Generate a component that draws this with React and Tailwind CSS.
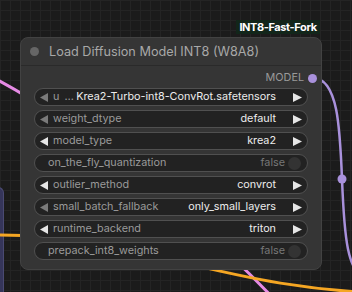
import React from "react";

const rows = [
  { type: "combo", label: "u", value: "Krea2-Turbo-int8-ConvRot.safetensors", leftOn: false, ellipsis: true },
  { type: "combo", label: "weight_dtype", value: "default", leftOn: false },
  { type: "combo", label: "model_type", value: "krea2", leftOn: true },
  { type: "toggle", label: "on_the_fly_quantization", value: "false" },
  { type: "combo", label: "outlier_method", value: "convrot", leftOn: true },
  { type: "combo", label: "small_batch_fallback", value: "only_small_layers", leftOn: false },
  { type: "combo", label: "runtime_backend", value: "triton", leftOn: true },
  { type: "toggle", label: "prepack_int8_weights", value: "false" },
];

function LeftArrow({ on }) {
  return (
    <svg width="8" height="9" viewBox="0 0 8 9" className="shrink-0">
      <polygon points="8,0 8,9 0,4.5" fill={on ? "#e6e6e6" : "#7a7a7a"} />
    </svg>
  );
}

function RightArrow() {
  return (
    <svg width="9" height="9" viewBox="0 0 9 9" className="shrink-0">
      <polygon points="0,0 0,9 9,4.5" fill="#e6e6e6" />
    </svg>
  );
}

function Row({ r }) {
  if (r.type === "toggle") {
    return (
      <div className="flex h-[18px] items-center rounded-full border border-[#505050] bg-[#222222] pl-[13px] pr-[6px]">
        <span className="flex-1 whitespace-nowrap text-[#9a9a9a]">{r.label}</span>
        <span className="text-[#777777]">{r.value}</span>
        <span className="ml-[3px] h-[13px] w-[13px] rounded-full bg-[#333333]" />
      </div>
    );
  }
  return (
    <div className="flex h-[18px] items-center rounded-full border border-[#505050] bg-[#222222] pl-[5px] pr-[5px]">
      <LeftArrow on={r.leftOn} />
      <span className="ml-[5px] whitespace-nowrap text-[#9a9a9a]">{r.label}</span>
      {r.ellipsis && <span className="ml-[5px] text-[#9a9a9a]">…</span>}
      <span className="flex-1 whitespace-nowrap text-right text-[#ececec]">{r.value}</span>
      <span className="ml-[17px]">
        <RightArrow />
      </span>
    </div>
  );
}

export default function App() {
  return (
    <div
      className="relative h-[292px] w-[352px] overflow-hidden bg-[#1b1b1b] bg-[linear-gradient(to_right,#242424_1px,transparent_1px),linear-gradient(to_bottom,#242424_1px,transparent_1px)] bg-[size:10px_10px]"
      style={{ fontFamily: "Inter, 'Noto Sans', sans-serif" }}
    >
      {/* navy node edge at left */}
      <div className="absolute left-[-40px] top-[187px] h-[140px] w-[44px] rounded-tr-[6px] border-r border-t border-[#4a4a72] bg-[#35355a]" />

      {/* links */}
      <svg className="absolute left-0 top-0" width="352" height="292">
        <path d="M -20 71 C 60 110, 180 200, 275 300" stroke="#e58ae4" strokeWidth="3" fill="none" />
        <path d="M 0 235 C 140 235, 230 293, 400 293" stroke="#f5a623" strokeWidth="3" fill="none" />
        <path d="M 313 78 C 363 78, 321 280, 371 280" stroke="#a991dc" strokeWidth="2.5" fill="none" />
        <circle cx="342" cy="179" r="4.5" fill="#a991dc" />
      </svg>

      {/* badge */}
      <div className="absolute left-[236px] top-[20px] flex h-[14px] w-[84px] items-center justify-center whitespace-nowrap bg-[#12261a] text-[11px] font-bold tracking-[-0.4px] text-white">
        INT8-Fast-Fork
      </div>

      {/* node */}
      <div className="absolute left-[20px] top-[37px] flex h-[233px] w-[302px] flex-col rounded-[8px] border border-[#424242] bg-[#353535] text-[10.8px]">
        <div className="flex h-[28px] shrink-0 items-center border-b border-[#2a2a2a] pl-[9px]">
          <span className="h-[9px] w-[9px] rounded-full bg-[#666666]" />
          <span className="ml-[10px] whitespace-nowrap text-[12.7px] text-[#a8a8a8]">Load Diffusion Model INT8 (W8A8)</span>
        </div>
        <div className="flex flex-1 flex-col px-[13px] pt-[4px]">
          <div className="flex h-[16px] items-center justify-end pr-[4px]">
            <span className="text-[#9a9a9a]">MODEL</span>
            <span className="absolute right-[4px] h-[9px] w-[9px] rounded-full bg-[#a991dc]" />
          </div>
          <div className="mt-[2px] flex flex-col gap-[4px]">
            {rows.map((r, i) => (
              <Row key={i} r={r} />
            ))}
          </div>
        </div>
      </div>
    </div>
  );
}
